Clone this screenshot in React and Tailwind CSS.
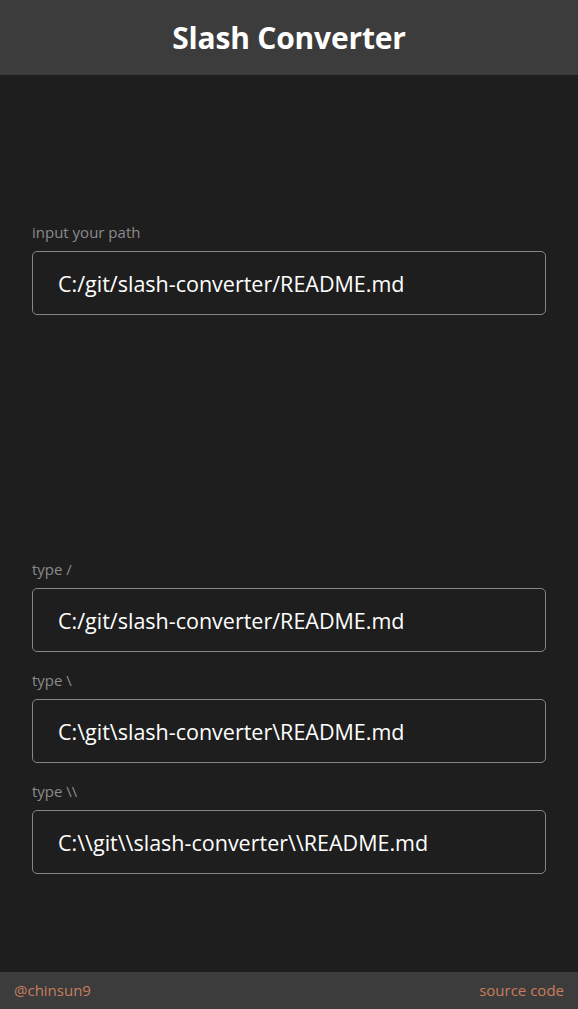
import { useState } from 'react';

const font = { fontFamily: '"Open Sans", "Noto Sans", sans-serif' };

function PathBox({ label, value, onChange, readOnly, className }) {
    return (
        <div className={className}>
            <p className="text-[15px] leading-5 text-[#8b8b8b]">{label}</p>
            <input
                className="mt-[9px] block w-full h-[64px] rounded-[5px] border border-[#85858a] bg-[#1e1e1e] px-[25px] text-[21.5px] text-white outline-none"
                style={font}
                value={value}
                onChange={onChange}
                readOnly={readOnly}
            />
        </div>
    );
}

export default function App() {
    const [path, setPath] = useState('C:/git/slash-converter/README.md');

    // normalise to forward slashes first, then swap
    const forward = path.replace(/\\+/g, '/');
    const back = forward.replace(/\//g, '\\');
    const doubleBack = forward.replace(/\//g, '\\\\');

    return (
        <div className="flex flex-col h-screen bg-[#1e1e1e]" style={font}>
            <header className="h-[75px] shrink-0 bg-[#3c3c3c] flex items-center justify-center">
                <h1 className="text-[30px] font-bold text-white tracking-[-0.2px]">Slash Converter</h1>
            </header>

            <main className="flex-1 px-8">
                <PathBox
                    className="mt-[147px]"
                    label="input your path"
                    value={path}
                    onChange={(e) => setPath(e.target.value)}
                />

                <PathBox className="mt-[244px]" label="type /" value={forward} readOnly />
                <PathBox className="mt-[18px]" label="type \" value={back} readOnly />
                <PathBox className="mt-[18px]" label="type \\" value={doubleBack} readOnly />
            </main>

            <footer className="h-[37px] shrink-0 bg-[#3c3c3c] flex items-center justify-between px-[14px] text-[15px] text-[#c97c5d]">
                <span>@chinsun9</span>
                <span>source code</span>
            </footer>
        </div>
    );
}
